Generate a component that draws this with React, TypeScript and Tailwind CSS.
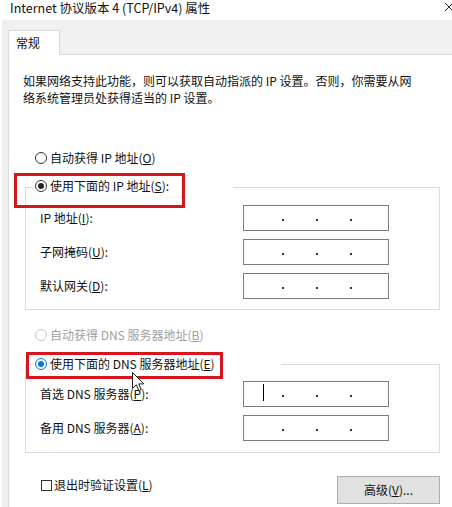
import React from 'react';

const FONT = "font-['Noto_Sans_CJK_SC','Noto_Sans',sans-serif]";

function Radio({ checked = false, disabled = false, blue = false }: { checked?: boolean; disabled?: boolean; blue?: boolean }) {
  const ring = disabled ? 'border-[#c8c8c8]' : blue ? 'border-[#0078d7]' : 'border-[#333333]';
  const dot = blue ? 'bg-[#0078d7]' : 'bg-[#222222]';
  return (
    <span className={`flex items-center justify-center w-[12px] h-[12px] rounded-full border bg-white shrink-0 ${ring}`}>
      {checked && <span className={`w-[6px] h-[6px] rounded-full ${dot}`} />}
    </span>
  );
}

function IpBox({ caret = false }: { caret?: boolean }) {
  return (
    <div className="relative flex items-center w-[146px] h-[26px] border border-[#7a7a7a] bg-white pl-[38px] pt-[4px] gap-[32px]">
      {caret && <span className="absolute left-[19px] top-[2px] w-[1px] h-[17px] bg-black" />}
      <span className="w-[2px] h-[2px] bg-[#333333]" />
      <span className="w-[2px] h-[2px] bg-[#333333]" />
      <span className="w-[2px] h-[2px] bg-[#333333]" />
    </div>
  );
}

function FieldRow({ children, caret = false, first = false }: { children: React.ReactNode; caret?: boolean; first?: boolean }) {
  return (
    <div className={`flex items-center pl-[14px] ${first ? '' : 'mt-[8px]'}`}>
      <span className="w-[203px] text-[12px] leading-[16px]">{children}</span>
      <IpBox caret={caret} />
    </div>
  );
}

export default function App() {
  return (
    <div className={`relative w-[452px] h-[507px] overflow-hidden bg-white text-[#111111] ${FONT}`}>
      {/* title bar */}
      <div className="flex items-start justify-between h-[20px] pl-[10px]">
        <span className="text-[12.5px] leading-[16px]">Internet 协议版本 4 (TCP/IPv4) 属性</span>
        <svg width="10" height="10" viewBox="0 0 10 10" className="mt-[2px] mr-[-2px]">
          <path d="M1 1 L9 9 M9 1 L1 9" stroke="#333" strokeWidth="1" />
        </svg>
      </div>

      <div className="ml-[2px] h-[487px] bg-[#f0f0f0] pl-[6px] pt-[10px] flex flex-col">
        {/* tab */}
        <div className="relative z-10 -mb-px w-[52px] h-[25px] bg-white border border-b-0 border-[#d9d9d9] pl-[7px] pt-[4px] text-[12px] leading-[16px]">
          常规
        </div>

        {/* tab page */}
        <div className="flex-1 bg-white border-t border-l border-[#d9d9d9] text-[12px]">
          <p className="mt-[17px] ml-[14px] leading-[17px] whitespace-nowrap">
            如果网络支持此功能，则可以获取自动指派的 IP 设置。否则，你需要从网
            <br />
            络系统管理员处获得适当的 IP 设置。
          </p>

          <div className="mt-[42px] pl-[26px] h-[20px] flex items-center gap-[3px]">
            <Radio />
            <span>自动获得 IP 地址(<u>O</u>)</span>
          </div>

          {/* IP group */}
          <div className="mt-[19px] ml-[16px] w-[415px] border border-[#dcdcdc] pb-[10px]">
            <div className="-mt-[12px] ml-[7px] w-[200px] h-[20px] bg-white pl-[2px] flex items-center gap-[3px]">
              <Radio checked />
              <span>使用下面的 IP 地址(<u>S</u>):</span>
            </div>
            <div className="mt-[9px]">
              <FieldRow first>IP 地址(<u>I</u>):</FieldRow>
              <FieldRow>子网掩码(<u>U</u>):</FieldRow>
              <FieldRow>默认网关(<u>D</u>):</FieldRow>
            </div>
          </div>

          <div className="mt-[15px] pl-[26px] h-[20px] flex items-center gap-[3px] text-[#a0a0a0]">
            <Radio disabled />
            <span>自动获得 DNS 服务器地址(<u>B</u>)</span>
          </div>

          {/* DNS group */}
          <div className="mt-[19px] ml-[16px] w-[415px] border border-[#dcdcdc] pb-[11px]">
            <div className="-mt-[11px] ml-[7px] w-[248px] h-[20px] bg-white pl-[2px] flex items-center gap-[3px]">
              <Radio checked blue />
              <span>使用下面的 DNS 服务器地址(<u>E</u>)</span>
            </div>
            <div className="mt-[7px]">
              <FieldRow first caret>首选 DNS 服务器(<u>P</u>):</FieldRow>
              <FieldRow>备用 DNS 服务器(<u>A</u>):</FieldRow>
            </div>
          </div>

          {/* footer */}
          <div className="mt-[23px] ml-[16px] w-[415px] flex items-start justify-between pl-[16px]">
            <div className="flex items-center gap-[2px] h-[18px]">
              <span className="w-[11px] h-[11px] border border-[#333333] bg-white" />
              <span>退出时验证设置(<u>L</u>)</span>
            </div>
            <button className="w-[103px] h-[28px] bg-[#e1e1e1] border border-[#adadad] text-[12px] leading-[16px]">
              高级(<u>V</u>)...
            </button>
          </div>
        </div>
      </div>

      {/* red annotation boxes */}
      <div className="absolute left-[14px] top-[173px] w-[171px] h-[35px] border-[3px] border-[#d8141c]" />
      <div className="absolute left-[26px] top-[352px] w-[197px] h-[27px] border-[3px] border-[#d8141c]" />

      {/* mouse pointer */}
      <svg className="absolute left-[132px] top-[372px]" width="13" height="20" viewBox="0 0 13 20">
        <path d="M0.5 0.5 L0.5 16.5 L4.3 12.8 L6.8 18.6 L9.2 17.6 L6.8 11.9 L11.8 11.9 Z" fill="white" stroke="#222" strokeWidth="1" strokeLinejoin="miter" />
      </svg>
    </div>
  );
}
